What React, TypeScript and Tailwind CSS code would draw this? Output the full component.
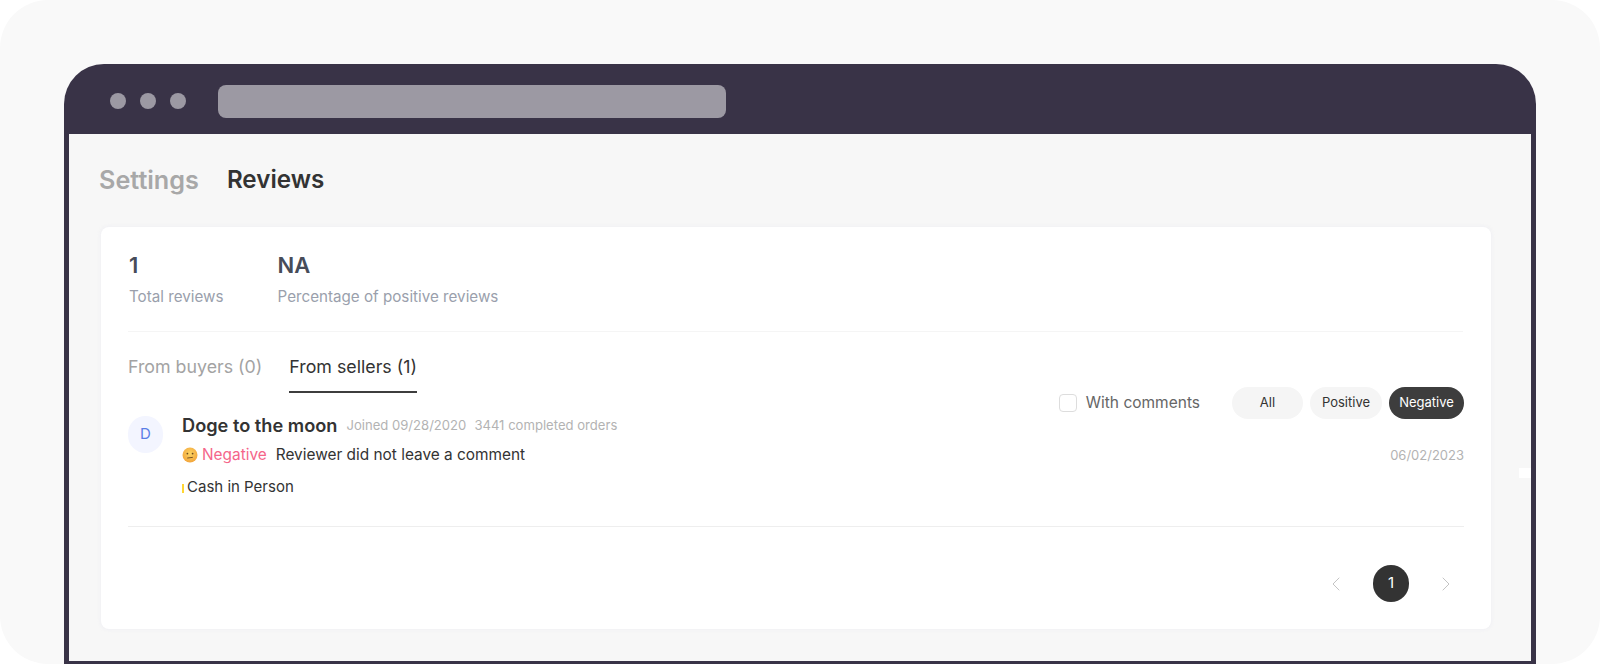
import { ChevronLeft, ChevronRight } from 'lucide-react';

const FILTERS = [
  { label: 'All', width: 'w-[71px]', active: false },
  { label: 'Positive', width: 'w-[72px]', active: false },
  { label: 'Negative', width: 'w-[75px]', active: true },
];

// Confused face next to the rating label
const FaceIcon = () => (
  <svg width="16" height="16" viewBox="0 0 16 16" className="shrink-0">
    <defs>
      <radialGradient id="face" cx="50%" cy="40%" r="60%">
        <stop offset="0%" stopColor="#fcd462" />
        <stop offset="100%" stopColor="#f2a53c" />
      </radialGradient>
    </defs>
    <circle cx="8" cy="8" r="7.5" fill="url(#face)" />
    <circle cx="5.4" cy="6.6" r="0.9" fill="#6b4a1e" />
    <circle cx="10.6" cy="6.6" r="0.9" fill="#6b4a1e" />
    <path d="M5.6 11 L10.4 10.4" stroke="#6b4a1e" strokeWidth="0.9" strokeLinecap="round" />
  </svg>
);

export default function App() {
  return (
    <div className="w-[1600px] h-[664px] overflow-hidden bg-white font-['Inter',sans-serif]">
      <div className="h-full rounded-[48px] bg-[#f9f9f9] pt-16 px-16">
        {/* Browser frame */}
        <div className="relative h-full rounded-t-[40px] bg-[#393347] px-[5px] pb-[3px] flex flex-col">
          <div className="h-[70px] shrink-0 flex items-center pl-[41px] pt-[4px]">
            <div className="flex gap-[14px]">
              <span className="w-4 h-4 rounded-full bg-[#9c99a3]" />
              <span className="w-4 h-4 rounded-full bg-[#9c99a3]" />
              <span className="w-4 h-4 rounded-full bg-[#9c99a3]" />
            </div>
            <div className="ml-[32px] w-[508px] h-[33px] rounded-lg bg-[#9c99a3]" />
          </div>

          <div className="flex-1 min-h-0 bg-[#f7f7f7] pl-8 pr-10 flex flex-col">
            {/* Page tabs */}
            <div className="h-[93px] shrink-0 -ml-[2px] flex items-center gap-[28px] text-[25.2px] font-semibold">
              <span className="text-[#a8a8a8]">Settings</span>
              <span className="text-[24.2px] text-[#333333]">Reviews</span>
            </div>

            <div className="relative h-[402px] rounded-lg bg-white shadow-[0_0_4px_rgba(230,230,240,0.6)] pl-[27px] pr-[27px]">
              {/* Stats */}
              <div className="h-[105px] mr-[1px] pl-[1px] border-b border-[#f5f5f5] pt-6 flex gap-[54px]">
                <div>
                  <div className="text-[22px] leading-[28px] font-semibold text-[#474c59]">1</div>
                  <div className="mt-[7px] text-[15.2px] leading-[22px] text-[#9a9fac]">Total reviews</div>
                </div>
                <div>
                  <div className="text-[22px] leading-[28px] font-semibold text-[#474c59]">NA</div>
                  <div className="mt-[7px] text-[15.2px] leading-[22px] text-[#9a9fac]">Percentage of positive reviews</div>
                </div>
              </div>

              {/* Review source tabs */}
              <div className="h-[61px] flex gap-[27px] text-[17.8px]">
                <div className="pt-[22px] text-[#a3a3a3]">From buyers (0)</div>
                <div className="pt-[22px] h-[61px] text-[#333333] border-b-2 border-[#3d3d3d]">From sellers (1)</div>
              </div>

              {/* Filters */}
              <div className="absolute top-[160px] right-[27px] flex items-center">
                <span className="w-[18px] h-[18px] rounded-[4px] border border-[#dddddd] bg-white" />
                <span className="ml-[9px] mr-[32px] text-[15.5px] text-[#666666]">With comments</span>
                <div className="flex gap-[7px]">
                  {FILTERS.map((filter) => (
                    <span
                      key={filter.label}
                      className={`${filter.width} h-[32px] rounded-full flex items-center justify-center text-[13px] ${
                        filter.active ? 'bg-[#3d3d3d] text-white' : 'bg-[#f5f5f5] text-[#333333]'
                      }`}
                    >
                      {filter.label}
                    </span>
                  ))}
                </div>
              </div>

              {/* Review row */}
              <div className="h-[134px] border-b border-[#eeeeee] pt-[23px] flex">
                <div className="w-[35px] h-[37px] rounded-full bg-[#f3f5ff] text-[#5a7ee6] text-[15px] flex items-center justify-center shrink-0">
                  D
                </div>
                <div className="ml-[19px] flex-1">
                  <div className="flex items-center h-[20px]">
                    <span className="text-[18.2px] font-semibold text-[#333333]">Doge to the moon</span>
                    <span className="ml-[9px] text-[13.1px] text-[#b3b3b3]">Joined 09/28/2020</span>
                    <span className="ml-[8px] text-[13.1px] text-[#b3b3b3]">3441 completed orders</span>
                  </div>
                  <div className="mt-[9px] flex items-center h-[20px] text-[15.4px]">
                    <FaceIcon />
                    <span className="ml-[4px] text-[#f5668a]">Negative</span>
                    <span className="ml-[9px] text-[#333333]">Reviewer did not leave a comment</span>
                    <span className="ml-auto mt-[2px] text-[13px] text-[#b3b3b3]">06/02/2023</span>
                  </div>
                  <div className="mt-[12px] flex items-center h-[20px] text-[15px] text-[#333333]">
                    <span className="w-[2px] h-[9px] bg-[#ffd633] mr-[3px] mt-[2px]" />
                    Cash in Person
                  </div>
                </div>
              </div>

              {/* Pagination */}
              <div className="pt-[38px] flex items-center justify-end pr-[6px]">
                <ChevronLeft className="w-6 h-6 text-[#c4c4c4]" strokeWidth={1} />
                <span className="mx-[25px] w-[36px] h-[37px] rounded-full bg-[#333333] text-white text-[15px] flex items-center justify-center">
                  1
                </span>
                <ChevronRight className="w-6 h-6 text-[#c4c4c4]" strokeWidth={1} />
              </div>
            </div>
          </div>

          {/* Stray white notch on the right edge */}
          <span className="absolute left-[1455px] top-[404px] w-[12px] h-[10px] bg-white" />
        </div>
      </div>
    </div>
  );
}
